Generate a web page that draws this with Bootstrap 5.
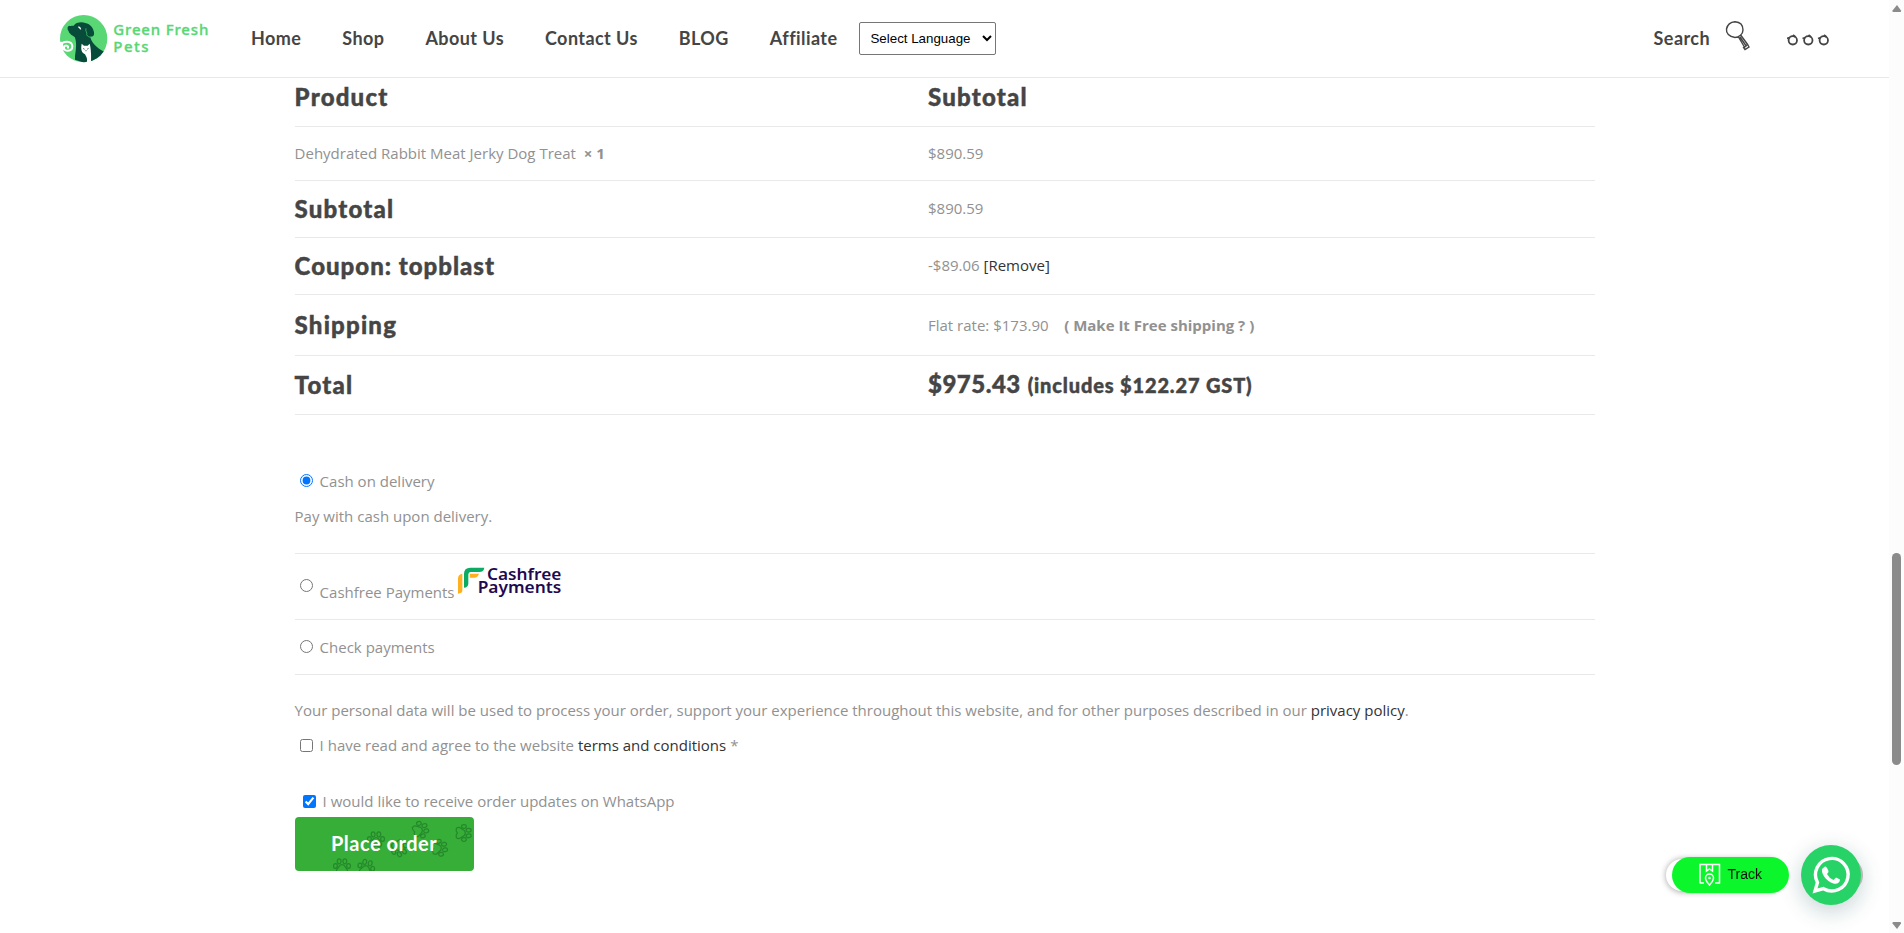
<!DOCTYPE html>
<html lang="en">
<head>
<meta charset="utf-8">
<meta name="viewport" content="width=device-width, initial-scale=1">
<title>Checkout – Green Fresh Pets</title>
<link href="https://cdn.jsdelivr.net/npm/bootstrap@5.3.0/dist/css/bootstrap.min.css" rel="stylesheet">
<style>
html,body{height:933px;overflow:hidden}
body{font:15px/35px "Open Sans",sans-serif;color:#919191;background:#fff}
.page{width:1889px}
.site-header{height:78px;border-bottom:1px solid #e9e9e9}
.logo{margin:-1px 0 0 50px;width:170px;height:60px}
.menu{margin:-2px 0 0 31px;gap:41px}
.menu a,.find{font:700 18px/24px Lato,sans-serif;letter-spacing:.42px;color:#454545;text-decoration:none;white-space:nowrap}
.find{margin-top:-1px}
.lang{margin-left:22px;width:137px;height:33px;border:1px solid #767676;border-radius:2px;font:13.33px "Liberation Sans",Arial,sans-serif;color:#000;background:#fff;padding:0 5px 0 6px}
.tools{margin-right:58px}
.glass{margin:-5px 0 0 15px}
.rings{margin-left:36px}
.wrap{width:1300px;margin-left:294.6px}
.line{border-bottom:1px solid #e9e9e9}
.c1{width:633.4px}
.head{font:900 24px/30px Lato,sans-serif;letter-spacing:1.2px;color:#454545;-webkit-text-stroke:.45px #454545}
.coupon{letter-spacing:1px}
.head small{font-size:20px;letter-spacing:.85px}
.sum{letter-spacing:.5px}
a.dark{color:#333;text-decoration:none}
.rows>div{display:flex;align-items:center;height:57px;border-bottom:1px solid #e9e9e9}
.rows>.r-title{height:49px;padding-bottom:10px}
.rows>.r-item{height:54px}
.rows>.r-ship{height:61px}
.rows>.r-total{height:59px}
.up{margin-top:-2px}
.cod{padding-top:49px;height:139px}
.cashfree{height:66px}
.cashfree span{padding-top:12px}
.cashfree svg{margin:-5px 0 0 2px}
.check{height:55px}
.privacy{margin-top:18px}
.whats{margin-top:21px;padding-left:3px}
input[type=radio],input[type=checkbox]{width:13px;height:13px;margin:0 7px 0 5px;accent-color:#0075ff;flex:none}
input.up{margin-top:-2px}
.order{width:179px;height:54px;margin-top:-2px;border:0;border-radius:4px;background:#37ae38;position:relative;overflow:hidden;padding:0;color:#fff;font:700 20px/52px Lato,sans-serif;letter-spacing:.5px}
.order svg{position:absolute;inset:0}
.order span{position:relative;top:-1px}
.rail{position:fixed;top:0;right:0;width:15px;height:933px;background:#fcfcfc}
.rail svg{display:block}
.float{position:fixed;left:1640px;top:820px}
</style>
</head>
<body>
<div class="page">
<header class="site-header d-flex align-items-center">
<svg class="logo" viewBox="0 0 510 180">
<defs><clipPath id="disc"><circle cx="101" cy="92" r="71"/></clipPath></defs>
<circle cx="101" cy="92" r="71" fill="#58d774"/>
<path d="M26 102L37 101L44 128Q38 128 31 120Z" fill="#fff"/>
<g clip-path="url(#disc)">
<path d="M53 58C54 52 63 54 71 53C78 43 94 41 106 45C120 48 128 57 131 69C135 82 129 87 121 86C123 101 139 120 165 132L145 155L120 170L75 155C74 142 78 128 78 116C79 104 77 94 74 87C68 83 55 75 56 69C52 66 53 62 53 58Z" fill="#074c3a"/>
<path d="M108 61C105 70 113 74 110 80C113 87 119 88 124 87" fill="none" stroke="#58d774" stroke-width="2"/>
<path d="M85 57q5 0 7 7" fill="none" stroke="#fff" stroke-width="4"/>
</g>
<path d="M95 107L102 113H113L119 107C123 120 124 145 123 161L110 163C114 152 108 146 105 139C94 133 92 124 95 107Z" fill="#fff"/>
<path d="M99 121l5 3m7 0l5-3m-10 7h4" stroke="#074c3a" stroke-width="2"/>
<path d="M33 112C38 98 66 97 67 115C67 133 40 132 42 118C44 110 56 112 54 119" fill="none" stroke="#fff" stroke-width="6" stroke-linecap="round"/>
<g fill="#58d774" stroke="#58d774" stroke-width="1" font-family="'Noto Sans',sans-serif" font-weight="500" font-size="45"><text x="190" y="81" textLength="285">Green Fresh</text><text x="190" y="132" textLength="106">Pets</text></g>
</svg>
<nav class="menu d-flex"><a href="#">Home</a><a href="#">Shop</a><a href="#">About Us</a><a href="#">Contact Us</a><a href="#">BLOG</a><a href="#">Affiliate</a></nav>
<select class="lang"><option>Select Language</option></select>
<div class="tools ms-auto d-flex align-items-center">
<span class="find">Search</span>
<svg class="glass" width="26" height="32" viewBox="0 0 26 32" fill="none" stroke="#454545" stroke-width="1.4"><path d="M1.500 9C2.500 4 6 2 10 1.700C15 2 18 5 18 10C18 14 14 17.500 10 17.500C4 17 1 13 1.500 9ZM13.500 17L20 28M23 25L16 15.500M15 17L21.500 26.500M18.500 27.500L22.500 24.500L24 27L20 29.500Z"/></svg>
<svg class="rings" width="44" height="14" viewBox="0 0 44 14" fill="none" stroke="#454545" stroke-width="1.800"><g id="ring"><circle cx="5.800" cy="8.300" r="4.200"/><path d="M0 6.500L3 5.500M6 3L8.500 5"/></g><use href="#ring" x="15.500"/><use href="#ring" x="31"/></svg>
</div>
</header>
<main class="wrap">
<div class="rows">
<div class="r-title"><div class="c1 head">Product</div><div class="head">Subtotal</div></div>
<div class="r-item"><div class="c1">Dehydrated Rabbit Meat Jerky Dog Treat&nbsp; <b>× 1</b></div><div>$890.59</div></div>
<div><div class="c1 head">Subtotal</div><div class="up">$890.59</div></div>
<div><div class="c1 head coupon">Coupon: topblast</div><div class="up">-$89.06 <a class="dark" href="#">[Remove]</a></div></div>
<div class="r-ship"><div class="c1 head">Shipping</div><div>Flat rate: $173.90 &nbsp;&nbsp; <b>( Make It Free shipping ? )</b></div></div>
<div class="r-total"><div class="c1 head">Total</div><div class="head up"><span class="sum">$975.43</span> <small>(includes $122.27 GST)</small></div></div>
</div>
<section class="line cod">
<label class="d-flex align-items-center"><input class="up" type="radio" name="pay" checked><span>Cash on delivery</span></label>
<div>Pay with cash upon delivery.</div>
</section>
<label class="line cashfree d-flex align-items-center"><input class="up" type="radio" name="pay"><span>Cashfree Payments</span>
<svg width="106" height="34" viewBox="0 0 318 102"><path d="M3 33Q5 21 16 20V70Q16 80 3 80Z" fill="#ffb01f"/><path d="M21 20Q21 2 40 2H82Q80 15 67 15H42Q34 15 34 24V50Q33 61 21 62Z" fill="#0bab64"/><path d="M38 20H66Q62 32 52 32H38Z" fill="#ffb01f"/><g fill="#1f0951" font-family="'Noto Sans',sans-serif" font-size="46" font-weight="600"><text x="90" y="38" textLength="223" lengthAdjust="spacingAndGlyphs">Cashfree</text><text x="62" y="79" textLength="251" lengthAdjust="spacingAndGlyphs">Payments</text></g></svg></label>
<label class="line check d-flex align-items-center"><input class="up" type="radio" name="pay"><span>Check payments</span></label>
<div class="privacy">Your personal data will be used to process your order, support your experience throughout this website, and for other purposes described in our <a class="dark" href="#">privacy policy</a>.</div>
<label class="d-flex align-items-center"><input type="checkbox"><span>I have read and agree to the website <a class="dark" href="#">terms and conditions</a> *</span></label>
<label class="whats d-flex align-items-center"><input type="checkbox" checked><span>I would like to receive order updates on WhatsApp</span></label>
<button class="order d-block">
<svg width="179" height="54" fill="none" stroke="#207c28" stroke-width="1.300" opacity=".75"><defs><g id="paw" transform="scale(.94)"><path d="M-5 7C-8 3-4 2-3-1Q0-4 3-1C4 2 8 3 5 7Q2 8 0 6Q-2 8-5 7Z"/><ellipse cx="-7" cy="-1" rx="2" ry="2.500"/><ellipse cx="-3" cy="-6" rx="2" ry="2.700"/><ellipse cx="3" cy="-6" rx="2" ry="2.700"/><ellipse cx="7" cy="-1" rx="2" ry="2.500"/></g></defs>
<use href="#paw" transform="translate(125 13) rotate(72)"/><use href="#paw" transform="translate(168 16) rotate(90)"/><use href="#paw" transform="translate(81 23)"/><use href="#paw" transform="translate(104 31) rotate(150)"/><use href="#paw" transform="translate(144 31) rotate(80)"/><use href="#paw" transform="translate(47 50)"/><use href="#paw" transform="translate(71 51) rotate(15)"/></svg>
<span>Place order</span></button>
</main>
</div>
<svg class="float" width="249" height="113" viewBox="0 0 249 113">
<defs><filter id="soft" x="-50%" y="-50%" width="200%" height="200%"><feGaussianBlur stdDeviation="3"/></filter><filter id="wide" x="-50%" y="-50%" width="200%" height="200%"><feGaussianBlur stdDeviation="11"/></filter></defs>
<rect x="26" y="39" width="118" height="33" rx="16.500" fill="#000" opacity=".36" filter="url(#soft)"/>
<rect x="26" y="39" width="125" height="32" rx="16" fill="#fff"/>
<circle cx="191" cy="61" r="31" fill="#0a4650" opacity=".22" filter="url(#wide)"/>
<rect x="200" y="40" width="23" height="30" rx="15" fill="#b9b9b9"/>
<rect x="32" y="37" width="117" height="36" rx="18" fill="#0bf72c"/>
<g fill="none" stroke="#fff" stroke-width="1.500"><path d="M64 63H60.500Q60 63 60 62.500V44.500H79.500V63H75M66.500 45V51L69.500 49L72.500 51V45"/><path d="M69.500 65C67 62 65.500 60.500 65.500 58A4 4 0 0 1 73.500 58C73.500 60.500 72 62 69.500 65Z"/></g><circle cx="69.500" cy="58" r="1.300" fill="#fff"/>
<text x="87.500" y="59" font-family="Liberation Sans,Arial,sans-serif" font-size="14" fill="#111">Track</text>
<circle cx="191" cy="55" r="30" fill="#27d367"/>
<path d="M175 71L177.500 62.500A16.300 16.300 0 1 1 183.500 68.700Z" fill="none" stroke="#fff" stroke-width="3.400"/>
<path d="M182 49L185 46.500Q186 46 187 48L188.500 51Q189 52 187 54Q189 58 193.500 60L196 57.500L200 59.500Q200 63 196 63.800C190 64 181 56 182 49Z" fill="#fff"/>
</svg>
<div class="rail"><svg width="15" height="933"><path d="M8 5L12 10.500Q12.500 12 11 12H4.500Q3 12 3.500 10.500Z" fill="#8b8b8b"/><rect x="3" y="553" width="9" height="212" rx="4.500" fill="#8b8b8b"/><path d="M8 929L12 923.500Q12.500 922 11 922H4.500Q3 922 3.500 923.500Z" fill="#8b8b8b"/></svg></div>
<script src="https://cdn.jsdelivr.net/npm/bootstrap@5.3.0/dist/js/bootstrap.bundle.min.js"></script>
</body>
</html>
